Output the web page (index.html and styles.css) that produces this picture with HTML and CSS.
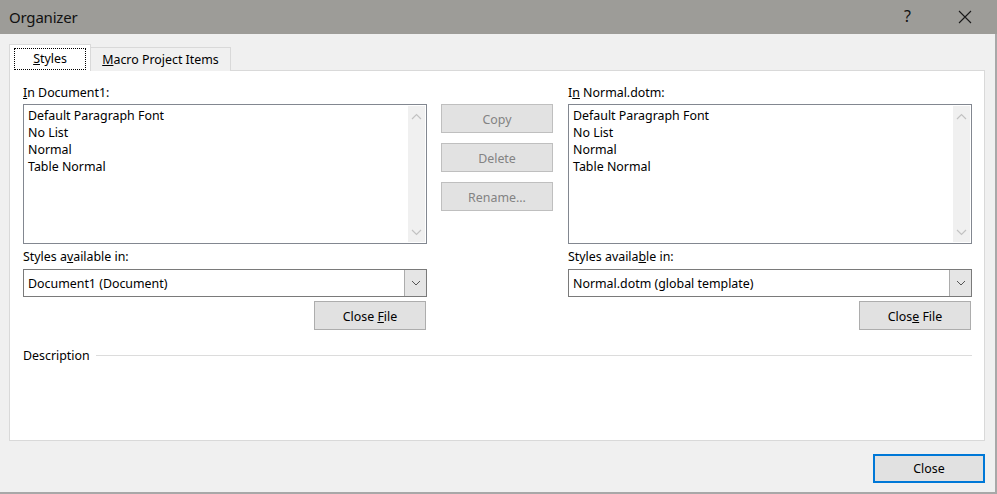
FILE: index.html
```html
<!DOCTYPE html>
<html>
<head>
<meta charset="utf-8">
<link rel="stylesheet" href="styles.css">
</head>
<body>
<div class="dialog">
  <div class="titlebar">
    <span class="title">Organizer</span>
    <span class="help">?</span>
    <svg class="closex" width="14" height="14" viewBox="0 0 14 14"><path d="M1 1 L13 13 M13 1 L1 13" stroke="#1a1a1a" stroke-width="1.1" fill="none"/></svg>
  </div>
  <div class="content">
    <div class="tabs">
      <div class="tab active"><span class="focus"><u>S</u>tyles</span></div>
      <div class="tab"><u>M</u>acro Project Items</div>
    </div>
    <div class="panel">
      <div class="columns">
        <div class="col">
          <div class="label"><u>I</u>n Document1:</div>
          <div class="list">
            <div class="items">
              <div>Default Paragraph Font</div>
              <div>No List</div>
              <div>Normal</div>
              <div>Table Normal</div>
            </div>
            <div class="scroll">
              <svg width="17" height="12" viewBox="0 0 17 12"><path d="M4 8 L8.5 3.5 L13 8" stroke="#c2c2c2" stroke-width="1.2" fill="none"/></svg>
              <svg width="17" height="12" viewBox="0 0 17 12"><path d="M4 4 L8.5 8.5 L13 4" stroke="#c2c2c2" stroke-width="1.2" fill="none"/></svg>
            </div>
          </div>
          <div class="label label2">Styles a<u>v</u>ailable in:</div>
          <div class="combo">
            <span class="combo-text">Document1 (Document)</span>
            <span class="drop"><svg width="10" height="6" viewBox="0 0 10 6"><path d="M1 1 L5 5 L9 1" stroke="#555" stroke-width="1" fill="none"/></svg></span>
          </div>
          <div class="btnrow"><button class="btn">Close <u>F</u>ile</button></div>
        </div>
        <div class="mid">
          <button class="btn disabled">Copy</button>
          <button class="btn disabled">Delete</button>
          <button class="btn disabled">Rename...</button>
        </div>
        <div class="col">
          <div class="label">I<u>n</u> Normal.dotm:</div>
          <div class="list">
            <div class="items">
              <div>Default Paragraph Font</div>
              <div>No List</div>
              <div>Normal</div>
              <div>Table Normal</div>
            </div>
            <div class="scroll">
              <svg width="17" height="12" viewBox="0 0 17 12"><path d="M4 8 L8.5 3.5 L13 8" stroke="#c2c2c2" stroke-width="1.2" fill="none"/></svg>
              <svg width="17" height="12" viewBox="0 0 17 12"><path d="M4 4 L8.5 8.5 L13 4" stroke="#c2c2c2" stroke-width="1.2" fill="none"/></svg>
            </div>
          </div>
          <div class="label label2">Styles availa<u>b</u>le in:</div>
          <div class="combo">
            <span class="combo-text">Normal.dotm (global template)</span>
            <span class="drop"><svg width="10" height="6" viewBox="0 0 10 6"><path d="M1 1 L5 5 L9 1" stroke="#555" stroke-width="1" fill="none"/></svg></span>
          </div>
          <div class="btnrow"><button class="btn">Clos<u>e</u> File</button></div>
        </div>
      </div>
      <div class="desc">
        <span>Description</span>
        <span class="rule"></span>
      </div>
    </div>
    <div class="footer">
      <button class="btn primary">Close</button>
    </div>
  </div>
</div>
</body>
</html>
```
FILE: styles.css
```css
html, body {
  margin: 0;
  padding: 0;
  background: #f0f0f0;
}
body {
  font-family: "Noto Sans", "Open Sans", sans-serif;
  font-size: 12.4px;
  color: #000;
  width: 997px;
  height: 494px;
  overflow: hidden;
}
.dialog {
  width: 995px;
  height: 492px;
  border-right: 2px solid #a8a8a8;
  border-bottom: 2px solid #a8a8a8;
  background: #f0f0f0;
}
.titlebar {
  height: 34px;
  background: #9d9c98;
  display: flex;
  align-items: center;
  padding-left: 9px;
  margin-right: -2px;
}
.title {
  font-size: 15px;
  color: #111;
  flex: 1;
  letter-spacing: -0.2px;
}
.help {
  font-size: 16px;
  color: #111;
  margin-right: 47px;
  margin-top: -2px;
}
.closex {
  margin-right: 25px;
}
.content {
  padding: 10px 0 0 9px;
}
.tabs {
  display: flex;
  align-items: flex-end;
  height: 27px;
  position: relative;
  z-index: 1;
  margin-bottom: -1px;
}
.tab {
  height: 24px;
  box-sizing: border-box;
  border: 1px solid #d9d9d9;
  border-bottom: none;
  background: #f0f0f0;
  padding: 0 10px;
  display: flex;
  align-items: center;
  line-height: 16px;
  width: 141px;
  justify-content: center;
}
.tab.active {
  height: 27px;
  width: 82px;
  background: #fff;
  padding: 0 4px 0 4px;
  align-items: flex-start;
  padding-top: 3px;
}
.focus {
  display: block;
  width: 72px;
  height: 22px;
  box-sizing: border-box;
  border: 1px dotted #000;
  text-align: center;
  line-height: 19px;
}
.tab + .tab {
  margin-left: -1px;
  padding: 0;
}
.panel {
  width: 976px;
  height: 371px;
  box-sizing: border-box;
  border: 1px solid #d9d9d9;
  background: #fff;
  padding: 14px 12px 0 13px;
}
.columns {
  display: flex;
}
.col {
  width: 404px;
  display: flex;
  flex-direction: column;
}
.label {
  height: 16px;
  line-height: 16px;
  margin-bottom: 3px;
}
.label2 {
  margin-top: 5px;
  margin-bottom: 4px;
}
.list {
  height: 140px;
  box-sizing: border-box;
  border: 1px solid #828790;
  display: flex;
  padding: 1px;
}
.items {
  flex: 1;
  padding: 1px 0 0 3px;
  line-height: 17px;
}
.scroll {
  width: 17px;
  background: #f0f0f0;
  display: flex;
  flex-direction: column;
  justify-content: space-between;
  padding: 5px 0 4px;
}
.scroll svg {
  display: block;
}
.combo {
  height: 28px;
  box-sizing: border-box;
  border: 1px solid #7a7a7a;
  display: flex;
  align-items: stretch;
}
.combo-text {
  flex: 1;
  padding-top: 1px;
  padding-left: 4px;
  line-height: 25px;
}
.drop {
  width: 21px;
  background: #e5e5e5;
  border-left: 1px solid #acacac;
  display: flex;
  align-items: center;
  justify-content: center;
  margin: 0;
}
.btnrow {
  display: flex;
  justify-content: flex-end;
  margin-top: 4px;
}
.btn {
  font-family: inherit;
  font-size: 12.4px;
  width: 112px;
  height: 29px;
  box-sizing: border-box;
  border: 1px solid #adadad;
  background: #e1e1e1;
  color: #000;
  padding: 2px 0 0;
  margin: 0;
  line-height: 16px;
}
.btnrow .btn {
  margin-right: 1px;
}
.btn.disabled {
  color: #838383;
  border-color: #bfbfbf;
  background: #e2e2e2;
}
.mid {
  width: 112px;
  margin: 0 15px 0 14px;
  padding-top: 19px;
  display: flex;
  flex-direction: column;
  gap: 10px;
}
.desc {
  display: flex;
  align-items: center;
  margin-top: 18px;
  height: 16px;
  line-height: 16px;
}
.rule {
  flex: 1;
  height: 1px;
  background: #dcdcdc;
  margin-left: 6px;
  margin-top: -2px;
}
.footer {
  display: flex;
  justify-content: flex-end;
  padding-top: 13px;
  padding-right: 10px;
}
.btn.primary {
  border: 2px solid #0078d7;
  background: #e1e1e1;
  padding-top: 0;
}
```
